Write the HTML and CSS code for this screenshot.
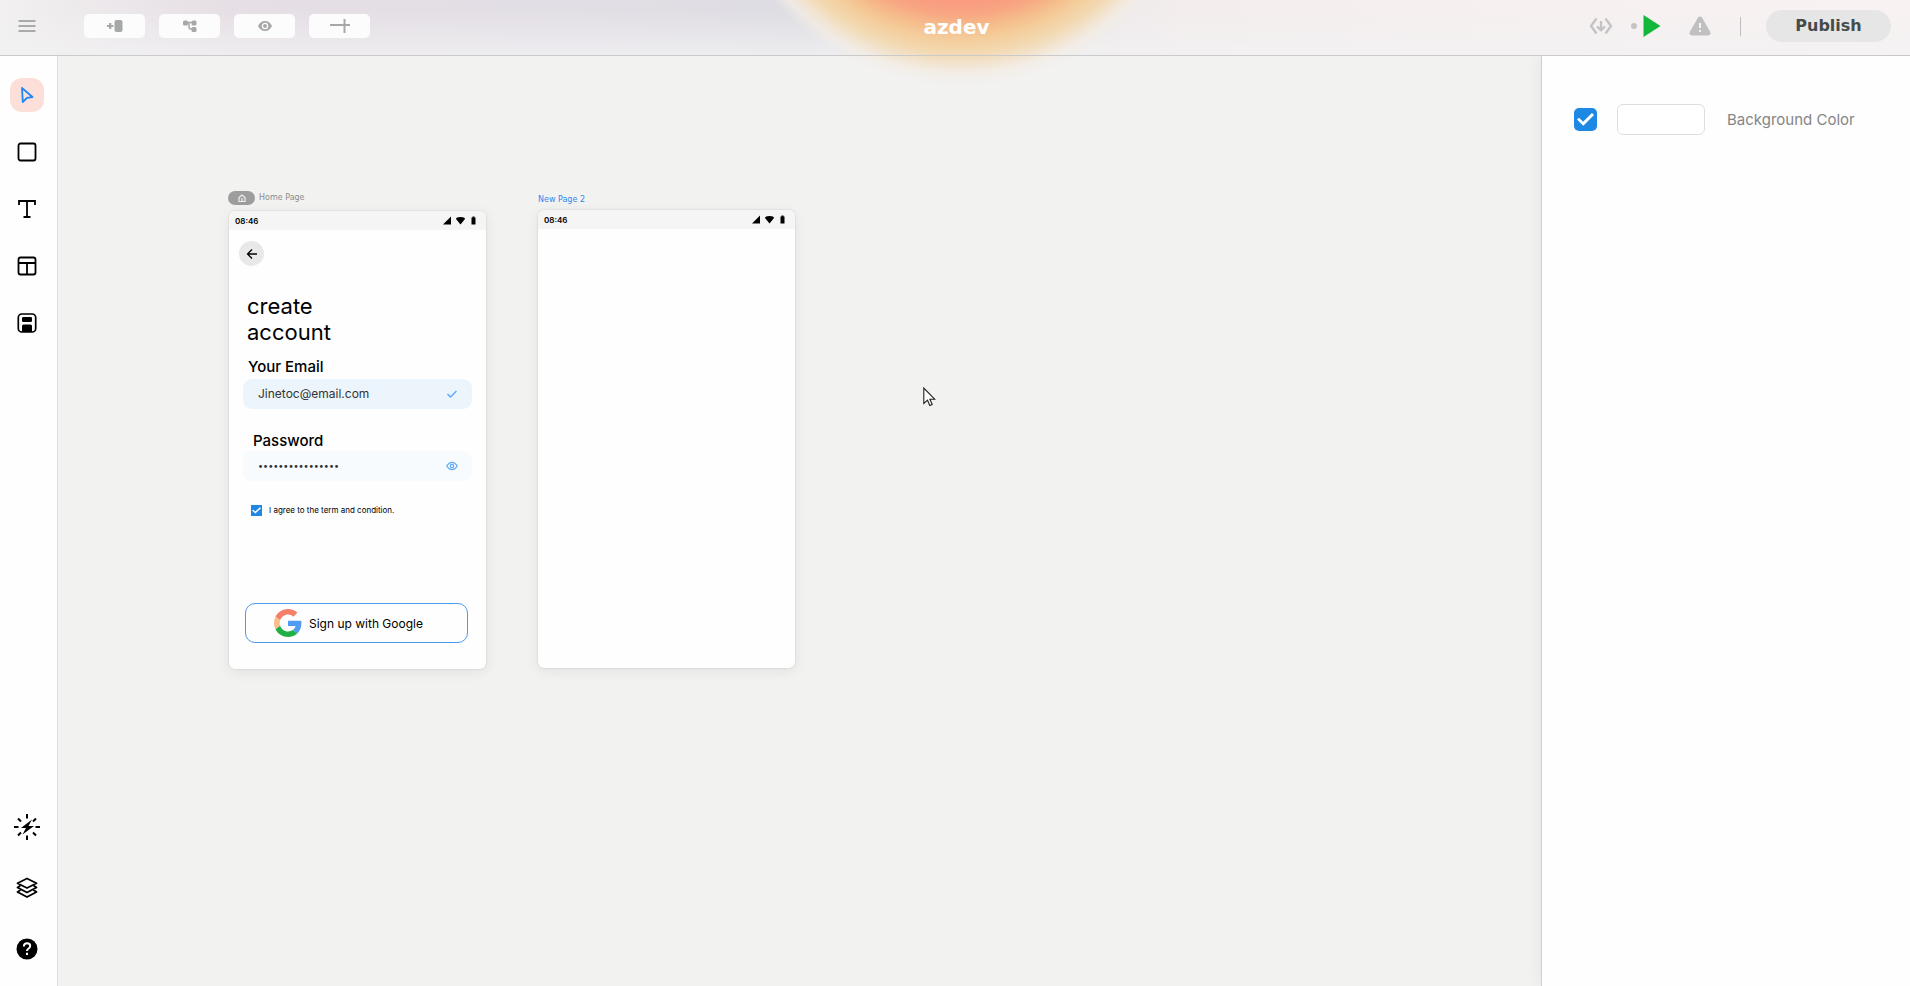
FILE: index.html
```html
<!DOCTYPE html>
<html lang="en">
<head>
<meta charset="utf-8">
<title>azdev</title>
<link rel="stylesheet" href="styles.css">
</head>
<body>
<div class="app">
  <header class="topbar">
    <div class="topbar-left">
      <button class="icon-btn" aria-label="Menu">
        <svg width="18" height="14" viewBox="0 0 18 14" fill="none" stroke="#a9abaa" stroke-width="2"><path d="M.5 2h17M.5 7h17M.5 12h17"/></svg>
      </button>
      <nav class="modes" aria-label="View">
        <button class="mode" aria-label="Add page"><svg width="18" height="14" viewBox="0 0 18 14"><rect x="8.500" y="1" width="8" height="12" rx="2" fill="#a6a8a7"/><path d="M1 7h6.500M4.200 4v6" stroke="#a6a8a7" stroke-width="2.200"/></svg></button>
        <button class="mode" aria-label="Page flow"><svg width="16" height="14" viewBox="0 0 16 14" fill="#a6a8a7"><rect x="1" y="1.500" width="5" height="5" rx="1.500"/><rect x="9.500" y="1.500" width="5" height="5" rx="1.500"/><rect x="9.500" y="8" width="5" height="5" rx="1.500"/><path d="M5 3.500h6M7 4v4q0 2 2 2h2" fill="none" stroke="#a6a8a7" stroke-width="1.500"/></svg></button>
        <button class="mode" aria-label="Preview"><svg width="16" height="14" viewBox="0 0 16 14"><path d="M1 7q2.500-5 7-5t7 5q-2.500 5-7 5T1 7z" fill="#a6a8a7"/><circle cx="8" cy="7" r="2.600" fill="#a6a8a7" stroke="#fcfcfc" stroke-width="1.300"/></svg></button>
        <button class="mode" aria-label="Guides"><svg width="20" height="14" viewBox="0 0 20 14"><path d="M0 6h20M14.500 0v14" stroke="#a6a8a7" stroke-width="2" fill="none"/></svg></button>
      </nav>
    </div>
    <div class="brand">azdev</div>
    <div class="topbar-right">
      <button class="icon-btn" aria-label="Download code">
        <svg width="24" height="18" viewBox="0 0 24 18" fill="none" stroke="#c4c3c3" stroke-width="2.300"><path d="M7.500 1.500L2 9l5.500 7.500M16.500 1.500L22 9l-5.500 7.500M12 4v9M8 9.500l4 3.700 4-3.700"/></svg>
      </button>
      <button class="run" aria-label="Run">
        <svg width="30" height="22" viewBox="0 0 30 22"><circle cx="3" cy="11" r="3" fill="#c4c3c3"/><path d="M12.500 0l17 11-17 11z" fill="#13b73a"/></svg>
      </button>
      <button class="icon-btn warn" aria-label="Issues">
        <svg width="22" height="20" viewBox="0 0 22 20"><path d="M9 1.500q2-2 4 0l8 14q1.500 3-1.500 4h-17q-3-1-1.500-4z" fill="#c1c0c0"/><path d="M11 7v5M11 14v2" stroke="#f5f3f3" stroke-width="2"/></svg>
      </button>
      <span class="divider"></span>
      <button class="publish">Publish</button>
    </div>
  </header>

  <div class="workspace">
    <aside class="tools">
      <div class="tool-group">
        <button class="tool tool-active" aria-label="Select"><svg width="16" height="18" viewBox="0 0 16 18"><path d="M3 2l10.500 9-5.500.8L3.800 16z" fill="none" stroke="#1e88f5" stroke-width="1.800" stroke-linejoin="round"/></svg></button>
        <button class="tool" aria-label="Rectangle"><svg width="20" height="20" viewBox="0 0 20 20"><rect x="1.500" y="1.500" width="17" height="17" rx="2" fill="none" stroke="#000" stroke-width="1.800"/></svg></button>
        <button class="tool" aria-label="Text"><svg width="20" height="20" viewBox="0 0 20 20"><path d="M2 6V2h16v4M10 2v16M6.500 18h7" fill="none" stroke="#000" stroke-width="1.800"/></svg></button>
        <button class="tool" aria-label="Layout"><svg width="20" height="20" viewBox="0 0 20 20"><path d="M3.500 1.500h13q2 0 2 2v13q0 2-2 2h-13q-2 0-2-2v-13q0-2 2-2zM1.500 7h17M10 7v11" fill="none" stroke="#000" stroke-width="1.800"/></svg></button>
        <button class="tool" aria-label="Saved components"><svg width="20" height="20" viewBox="0 0 20 20"><rect x="1.300" y="1" width="17.400" height="18" rx="3.500" fill="none" stroke="#000" stroke-width="1.700"/><rect x="5" y="4" width="10" height="5" rx="1.300"/><path d="M5 19v-6q0-1.500 1.500-1.500h7q1.500 0 1.500 1.500v6z"/></svg></button>
      </div>
      <div class="tool-group tool-group-low">
        <button class="tool" aria-label="Actions"><svg width="26" height="26" viewBox="0 0 26 26"><path d="M18 5.500L7 14h5L8.500 20.500 20 12h-5.500z"/><path d="M13 0v4.500M13 21.500V26M0 13h4.500M21.500 13H26M4 4.500l3 3M19 18.500l3 3M22 4.500l-3 3M7 18.500l-3 3" stroke="#000" stroke-width="2"/></svg></button>
        <button class="tool" aria-label="Layers"><svg width="22" height="22" viewBox="0 0 22 22" fill="none" stroke="#000" stroke-width="1.800" stroke-linejoin="round"><path d="M11 1.500l9.500 4.800L11 11 1.500 6.300z"/><path d="M4.500 8.500l-3 2L11 15.500l9.500-5-3-2M4.500 13l-3 2 9.500 5 9.500-5-3-2"/></svg></button>
        <button class="tool" aria-label="Help"><svg width="22" height="22" viewBox="0 0 22 22"><circle cx="11" cy="11" r="10.500"/><path d="M7.800 8.500q.2-3.200 3.300-3.200t3.100 2.700q0 1.500-1.600 2.500t-1.600 2.500M11 14.800v2.200" fill="none" stroke="#fff" stroke-width="2"/></svg></button>
      </div>
    </aside>

    <main class="canvas">
      <div class="page-label label-home"><span class="home-chip"><svg width="8" height="8" viewBox="0 0 8 8"><path d="M1 3.500L4 1l3 2.500V7.500H1zM4 4v3.500" fill="none" stroke="#eee" stroke-width="1.200"/></svg></span>Home Page</div>
      <section class="board board-home">
        <div class="statusbar"><span>08:46</span><svg width="34" height="9" viewBox="0 0 34 9"><path d="M0 8.500L8 .5v8zM13 3q0-2 4.500-2T22 3l-4.500 5.500zM28.500 1.500h1V.5h2v1h1v7h-4z"/></svg></div>
        <button class="back" aria-label="Back"><svg width="12" height="12" viewBox="0 0 12 12"><path d="M11 6H1.500M6 1.500L1.500 6 6 10.500" fill="none" stroke="#000" stroke-width="1.300"/></svg></button>
        <h1 class="title">create<br>account</h1>
        <label class="field-label" for="email">Your Email</label>
        <div class="field"><input id="email" type="email" value="Jinetoc@email.com"><svg width="12" height="10" viewBox="0 0 12 10"><path d="M1.500 5l3 3L10.500 2" fill="none" stroke="#62aaf6" stroke-width="1.500"/></svg></div>
        <label class="field-label label-password" for="password">Password</label>
        <div class="field field-password"><input id="password" type="password" value="abcdefghijklmnop"><svg width="12" height="10" viewBox="0 0 12 10" fill="none" stroke="#62aaf6" stroke-width="1.200"><path d="M.7 5Q3 1.300 6 1.300T11.300 5Q9 8.700 6 8.700T.7 5z"/><circle cx="6" cy="5" r="1.700"/></svg></div>
        <label class="terms"><input class="check check-small" type="checkbox" checked>I agree to the term and condition.</label>
        <button class="google"><svg width="28" height="28" viewBox="0 0 48 48"><path fill="#f5806a" d="M24 9.500c3.540 0 6.710 1.220 9.210 3.600l6.850-6.850C35.900 2.380 30.470 0 24 0 14.620 0 6.510 5.380 2.560 13.220l7.980 6.190C12.430 13.720 17.740 9.500 24 9.500z"/><path fill="#4f9cf5" d="M46.980 24.550c0-1.570-.15-3.090-.38-4.550H24v9.020h12.940c-.58 2.960-2.260 5.480-4.780 7.180l7.730 6c4.510-4.180 7.090-10.360 7.090-17.650z"/><path fill="#f9be8c" d="M10.530 28.590c-.48-1.450-.76-2.990-.76-4.590s.27-3.140.76-4.590l-7.980-6.190C.92 16.460 0 20.120 0 24c0 3.880.92 7.540 2.560 10.780l7.970-6.190z"/><path fill="#20b045" d="M24 48c6.480 0 11.930-2.130 15.890-5.810l-7.730-6c-2.150 1.450-4.920 2.300-8.160 2.300-6.260 0-11.570-4.220-13.470-9.910l-7.980 6.190C6.510 42.620 14.620 48 24 48z"/></svg>Sign up with Google</button>
      </section>

      <div class="page-label label-new">New Page 2</div>
      <section class="board board-new">
        <div class="statusbar"><span>08:46</span><svg width="34" height="9" viewBox="0 0 34 9"><path d="M0 8.500L8 .5v8zM13 3q0-2 4.500-2T22 3l-4.500 5.500zM28.500 1.500h1V.5h2v1h1v7h-4z"/></svg></div>
      </section>

      <svg class="pointer" width="13" height="20" viewBox="0 0 13 20"><path d="M.8 1v15.500l3.700-3.300 2.300 5.300 2.400-1-2.300-5.200h5z" fill="#fff" stroke="#222" stroke-width="1.100"/></svg>
    </main>

    <aside class="inspector">
      <div class="prop">
        <input class="check" id="bg-on" type="checkbox" aria-label="Use background color" checked>
        <input class="swatch" id="bg-color" type="color" value="#ffffff">
        <label for="bg-color">Background Color</label>
      </div>
    </aside>
  </div>
</div>
</body>
</html>
```

FILE: styles.css
```css
* { box-sizing: border-box; }
body { margin: 0; font-family: Inter, "Liberation Sans", sans-serif; color: #000; }
button { border: 0; padding: 0; background: none; font: inherit; color: inherit; }
svg { display: block; flex: none; }

.app { min-height: 100vh; display: flex; flex-direction: column; }

.topbar {
  position: relative;
  z-index: 2;
  height: 56px;
  padding: 0 19px 4px 10px;
  display: grid;
  grid-template-columns: 1fr auto 1fr;
  align-items: center;
  background:
    linear-gradient(to bottom, rgba(242, 242, 242, 0) 20%, rgba(242, 242, 243, .75) 100%),
    linear-gradient(to right, #f2f0f0 0%, #e6dfe5 12%, #e2dee5 30%, #dedde3 42%, #f3eded 62%, #f6f0f0 80%, #f8f2f2 100%);
}
/* Warm glow that spills from the bar onto the canvas */
.topbar::before {
  content: "";
  position: absolute;
  z-index: -1;
  top: 0;
  left: 50%;
  width: 480px;
  height: 90px;
  margin-left: -235px;
  background: radial-gradient(circle 248px at 240px -162px, #f99a7e 65%, #f8a682 71%, #f5bf8d 77%, #f4cf9e 82%, #f2d9b2 87%, #f2e3cd 91%, rgba(243, 236, 228, .8) 95%, rgba(242, 240, 242, 0) 100%);
  pointer-events: none;
}
.topbar::after {
  content: "";
  position: absolute;
  z-index: -1;
  left: 0;
  right: 0;
  bottom: 0;
  height: 1px;
  background: #cbcaca;
}
.topbar-left, .topbar-right, .modes { display: flex; align-items: center; }
.topbar-left { gap: 40px; }
.modes { gap: 14px; }
.icon-btn { width: 34px; height: 32px; display: grid; place-items: center; }
.mode { width: 61px; height: 24px; display: grid; place-items: center; border-radius: 5px; background: #fcfcfc; }
.brand { padding: 2px 0 0 12px; font: bold 20px/24px "DejaVu Sans", sans-serif; color: #fff; }
.topbar-right { justify-content: flex-end; }
.run { width: 30px; margin: 0 22px 0 13px; }
.warn { margin-right: 23px; }
.divider { width: 1px; height: 19px; margin-right: 25px; background: #bfbebe; }
.publish { width: 125px; height: 32px; border-radius: 16px; background: #e7e6e6; color: #454b4b; font: bold 16px/32px "DejaVu Sans", sans-serif; }

.workspace { flex: 1; display: flex; }

.tools { width: 58px; padding: 22px 0 20px 10px; display: flex; flex-direction: column; justify-content: space-between; border-right: 1px solid #dedfe0; background: #fefefe; }
.tool-group { display: flex; flex-direction: column; gap: 23px; }
.tool-group-low { gap: 27px; }
.tool { width: 34px; height: 34px; display: grid; place-items: center; border-radius: 12px; }
.tool-active { background: #fddfd9; }

.canvas { flex: 1; position: relative; background: #f2f2f1; }
.page-label { position: absolute; display: flex; align-items: center; gap: 4px; font: 8px/14px "DejaVu Sans", sans-serif; }
.label-home { left: 170px; top: 135px; color: #8c8c8c; }
.label-new { left: 480px; top: 137px; color: #2f88ee; }
.home-chip { width: 27px; height: 14px; display: grid; place-items: center; border-radius: 7px; background: #9d9d9d; }

.board { position: absolute; width: 257px; overflow: hidden; border-radius: 6px; background: #fefefe; }
.board { box-shadow: 0 0 2px rgba(0, 0, 0, .16), 0 3px 14px rgba(0, 0, 0, .07); }
.board-home { left: 171px; top: 155px; padding-bottom: 26px; display: flex; flex-direction: column; align-items: flex-start; }
.board-new { left: 480px; top: 154px; height: 458px; }
.statusbar { width: 100%; height: 19px; padding: 0 9px 0 6px; display: flex; align-items: center; justify-content: space-between; background: #f5f5f5; font-size: 8px; line-height: 18px; font-weight: 600; }

.back { width: 25px; height: 25px; margin: 11px 0 0 10px; display: grid; place-items: center; border-radius: 50%; background: #e8e8e8; }
.title { margin: 27px 0 0 18px; font-size: 22px; line-height: 26px; font-weight: 400; }
.field-label { margin: 12px 0 2px 19px; font-size: 15px; line-height: 20px; font-weight: 500; }
.label-password { margin: 22px 0 0 24px; }
.field { width: 229px; height: 30px; margin-left: 14px; padding: 0 14px 0 15px; display: flex; align-items: center; border-radius: 9px; background: #ebf5fb; }
.field-password { background: #f7fbfe; }
.field input { flex: 1; min-width: 0; padding: 0; border: 0; outline: 0; background: none; font: 12px/20px Inter, sans-serif; color: #333; }
.field-password input { font-size: 9px; }
.terms { margin: 24px 0 0 22px; height: 11px; display: flex; align-items: center; gap: 7px; font-size: 8px; line-height: 11px; }
.google { width: 223px; height: 40px; margin: 87px 0 0 16px; padding-left: 28px; display: flex; align-items: center; gap: 7px; border: 1px solid #4a9af2; border-radius: 10px; font-size: 12px; }

.check { appearance: none; flex: none; width: 23px; height: 23px; margin: 0; border-radius: 5px; background: #1e88e5; display: grid; place-items: center; }
.check::before { content: ""; width: 17px; height: 14px; background: #fff; clip-path: polygon(0 50%, 12% 38%, 36% 66%, 88% 4%, 100% 18%, 37% 94%); }
.check-small { width: 11px; height: 11px; border-radius: 0; }
.check-small::before { width: 9px; height: 7px; }

.pointer { position: absolute; left: 865px; top: 331px; }

.inspector { width: 369px; padding: 48px 32px; border-left: 1px solid #cfcfcf; background: #fefefe; box-shadow: -4px 0 12px rgba(0, 0, 0, .04); z-index: 1; }
.prop { display: flex; align-items: center; font-size: 15px; color: #858585; }
.swatch { appearance: none; width: 88px; height: 31px; margin: 0 22px 0 20px; padding: 3px; border: 1px solid #dedede; border-radius: 6px; background: #fff; }
.swatch::-webkit-color-swatch-wrapper { padding: 0; }
.swatch::-webkit-color-swatch { border: 0; }
```
